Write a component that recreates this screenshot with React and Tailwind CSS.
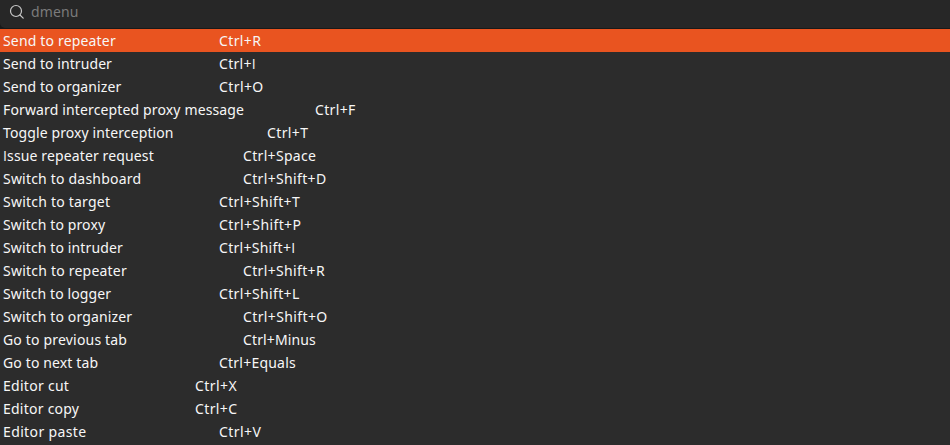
const entries = [
  { label: 'Send to repeater', keys: 'Ctrl+R', column: 'w-[216px] tracking-[0.17px]', spacing: 'tracking-[0.38px]', selected: true },
  { label: 'Send to intruder', keys: 'Ctrl+I', column: 'w-[216px] tracking-[0.08px]', spacing: 'tracking-[0.3px]' },
  { label: 'Send to organizer', keys: 'Ctrl+O', column: 'w-[216px] tracking-[0.09px]', spacing: 'tracking-[0.4px]' },
  { label: 'Forward intercepted proxy message', keys: 'Ctrl+F', column: 'w-[312px] tracking-[0.14px]', spacing: 'tracking-[0.35px]' },
  { label: 'Toggle proxy interception', keys: 'Ctrl+T', column: 'w-[264px] tracking-[0.11px]', spacing: 'tracking-[0.37px]' },
  { label: 'Issue repeater request', keys: 'Ctrl+Space', column: 'w-[240px] tracking-[0.13px]', spacing: 'tracking-[0.32px]' },
  { label: 'Switch to dashboard', keys: 'Ctrl+Shift+D', column: 'w-[240px] tracking-[0.2px]', spacing: 'tracking-[0.35px]' },
  { label: 'Switch to target', keys: 'Ctrl+Shift+T', column: 'w-[216px] tracking-[0.22px]', spacing: 'tracking-[0.35px]' },
  { label: 'Switch to proxy', keys: 'Ctrl+Shift+P', column: 'w-[216px] tracking-[0.12px]', spacing: 'tracking-[0.4px]' },
  { label: 'Switch to intruder', keys: 'Ctrl+Shift+I', column: 'w-[216px] tracking-[0.13px]', spacing: 'tracking-[0.28px]' },
  { label: 'Switch to repeater', keys: 'Ctrl+Shift+R', column: 'w-[240px] tracking-[0.22px]', spacing: 'tracking-[0.35px]' },
  { label: 'Switch to logger', keys: 'Ctrl+Shift+L', column: 'w-[216px] tracking-[0.1px]', spacing: 'tracking-[0.35px]' },
  { label: 'Switch to organizer', keys: 'Ctrl+Shift+O', column: 'w-[240px] tracking-[0.13px]', spacing: 'tracking-[0.38px]' },
  { label: 'Go to previous tab', keys: 'Ctrl+Minus', column: 'w-[240px] tracking-[0.18px]', spacing: 'tracking-[0.13px]' },
  { label: 'Go to next tab', keys: 'Ctrl+Equals', column: 'w-[216px] tracking-[0.13px]', spacing: 'tracking-[0.22px]' },
  { label: 'Editor cut', keys: 'Ctrl+X', column: 'w-[192px] tracking-[0.28px]', spacing: 'tracking-[0.45px]' },
  { label: 'Editor copy', keys: 'Ctrl+C', column: 'w-[192px] tracking-[0.24px]', spacing: 'tracking-[0.37px]' },
  { label: 'Editor paste', keys: 'Ctrl+V', column: 'w-[216px] tracking-[0.37px]', spacing: 'tracking-[0.43px]' },
];

function SearchIcon() {
  return (
    <svg className="mt-px size-4 shrink-0 text-[#c8c8c8]" viewBox="0 0 16 16" fill="none" stroke="currentColor" strokeWidth="1.2">
      <circle cx="7" cy="7" r="5.5" />
      <path d="M11 11l3.2 3.2" strokeLinecap="round" />
    </svg>
  );
}

function PlainI({ text }) {
  return text.split(/(I)/).map((part, i) =>
    part === 'I' ? <span key={i} className="font-['Open_Sans',sans-serif]">I</span> : part
  );
}

function Entry({ label, keys, column, spacing, selected }) {
  return (
    <li className={`flex h-[23px] items-center pl-[3px] ${selected ? 'bg-[#e95420]' : ''}`}>
      <span className={`shrink-0 ${column}`}><PlainI text={label} /></span>
      <span className={spacing}><PlainI text={keys} /></span>
    </li>
  );
}

export default function App() {
  return (
    <div className="flex h-[445px] w-[950px] flex-col overflow-hidden bg-[#2c2c2c] font-['Noto_Sans',sans-serif] text-[14px] leading-[23px] whitespace-pre text-[#f7f7f7]">
      <div className="h-[29px] shrink-0 bg-[#191919]">
        <div className="flex h-7 items-center gap-[6px] rounded-bl-[5px] bg-[#272727] pb-[5px] pl-[9px]">
          <SearchIcon />
          <span className="tracking-[0.1px] text-[#7b7b7b]">dmenu</span>
        </div>
      </div>
      <ul>
        {entries.map((entry) => <Entry key={entry.label} {...entry} />)}
      </ul>
    </div>
  );
}
